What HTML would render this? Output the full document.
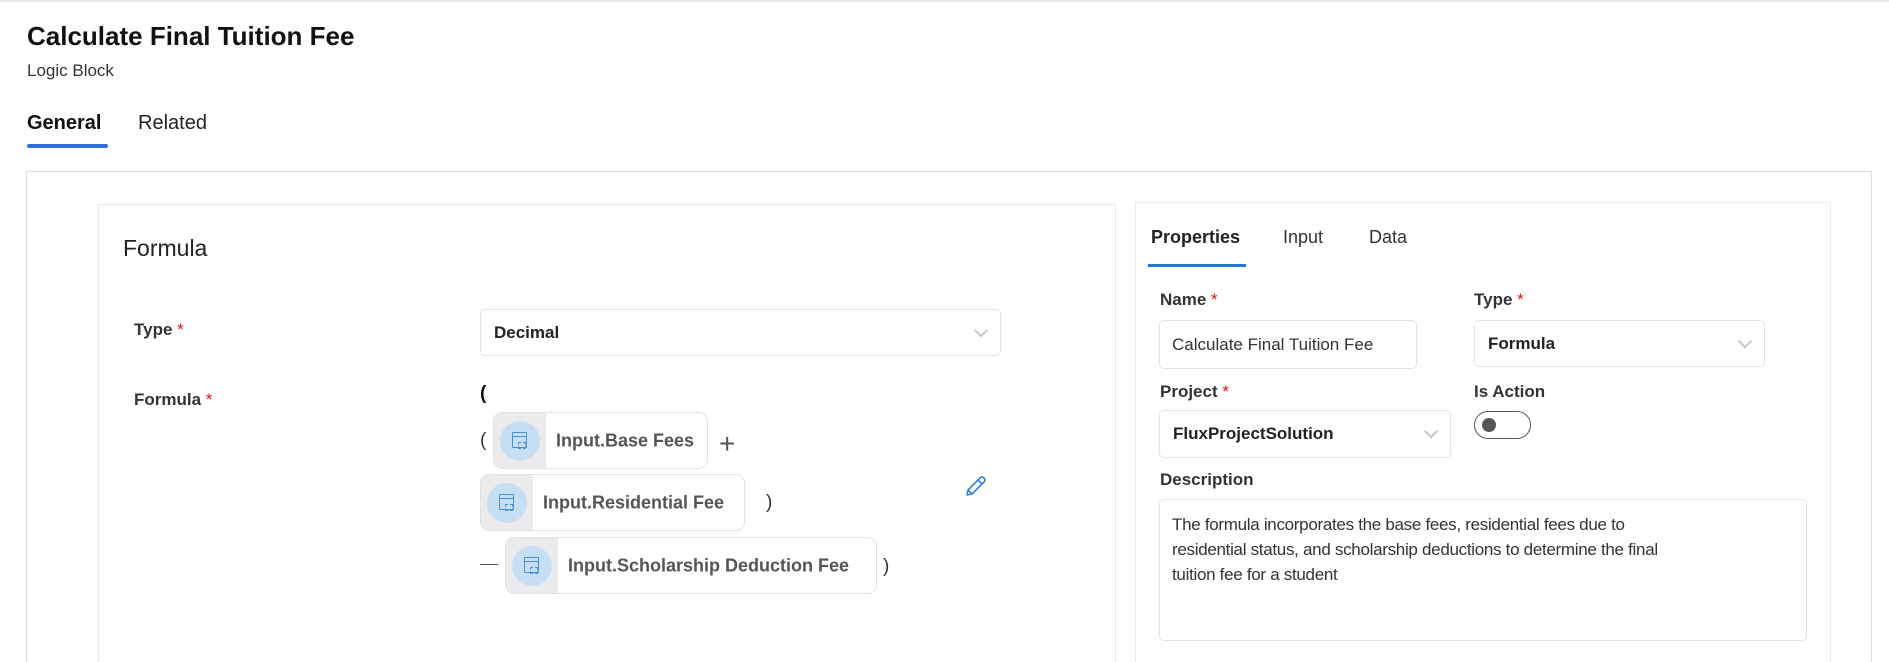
<!DOCTYPE html>
<html><head><meta charset="utf-8"><style>
*{box-sizing:border-box;margin:0;padding:0}
html,body{width:1889px;height:662px;overflow:hidden}
body{background:#fff;font-family:"Liberation Sans",sans-serif;color:#222;position:relative}
.a{position:absolute;white-space:nowrap}
.lbl{font-size:17px;font-weight:bold;color:#333}
.req{color:#d11;font-weight:normal}
.box{position:absolute;border:1px solid #e3e3e3;border-radius:5px;background:#fff}
.sel .t{position:absolute;left:13px;top:50%;transform:translateY(-50%);font-size:17px;font-weight:bold;color:#222}
.chev{position:absolute;right:14px;top:50%;width:10px;height:10px;border-right:2px solid #c8c8c8;border-bottom:2px solid #c8c8c8;transform:translateY(-75%) rotate(45deg)}
.chip{position:absolute;height:57px;border:1px solid #e2e2e2;border-radius:9px;background:#fff;overflow:hidden}
.chip .l{position:absolute;left:0;top:0;bottom:0;width:52px;background:#ebebed}
.chip .c{position:absolute;left:6px;top:8px;width:40px;height:40px;border-radius:50%;background:#c7dff4}
.chip .c i{position:absolute;left:12px;top:11px;width:15px;height:16px;border:1.5px solid #4a8fd8;border-radius:1px}
.chip .c i:before{content:"";position:absolute;left:0;right:0;top:3px;border-top:1.5px solid #4a8fd8}
.chip .c b{position:absolute;left:18px;top:21px;width:8px;height:7px;border:1.5px dashed #4a8fd8}
.chip .tx{position:absolute;left:62px;top:50%;transform:translateY(-50%);font-size:18px;font-weight:bold;color:#555}
.op{font-size:19px;color:#333}
</style></head><body>
<div class="a" style="left:0;top:0;width:1889px;border-top:2px solid #e8e8e8"></div>
<div class="a" style="left:27px;top:21px;font-size:26px;font-weight:bold;color:#111">Calculate Final Tuition Fee</div>
<div class="a" style="left:27px;top:61px;font-size:17px;color:#333">Logic Block</div>
<div class="a" style="left:27px;top:112px;font-size:20px;font-weight:bold;color:#111">General</div>
<div class="a" style="left:138px;top:112px;font-size:20px;color:#222">Related</div>
<div class="a" style="left:27px;top:144px;width:81px;height:4px;background:#2d6fd6;border-radius:2px"></div>

<div class="a" style="left:26px;top:171px;width:1846px;height:491px;border:1px solid #ddd;border-bottom:none"></div>
<div class="a" style="left:98px;top:204px;width:1018px;height:458px;border:1px solid #eaeaea;border-bottom:none"></div>
<div class="a" style="left:123px;top:235px;font-size:23px;color:#222">Formula</div>

<div class="a lbl" style="left:134px;top:320px">Type <span class="req">*</span></div>
<div class="box sel" style="left:480px;top:309px;width:521px;height:47px"><span class="t">Decimal</span><span class="chev"></span></div>
<div class="a lbl" style="left:134px;top:390px">Formula <span class="req">*</span></div>

<div class="a op" style="left:480px;top:383px;font-weight:bold;color:#111">(</div>
<div class="a op" style="left:480px;top:430px">(</div>
<div class="chip" style="left:493px;top:412px;width:215px"><div class="l"></div><div class="c"><i></i><b></b></div><span class="tx">Input.Base Fees</span></div>
<div class="a" style="left:719px;top:428px;font-size:28px;color:#555;font-weight:100">+</div>
<div class="chip" style="left:480px;top:474px;width:265px"><div class="l"></div><div class="c"><i></i><b></b></div><span class="tx">Input.Residential Fee</span></div>
<div class="a op" style="left:766px;top:492px">)</div>
<div class="a" style="left:480px;top:564px;width:18px;border-top:1.5px solid #555"></div>
<div class="chip" style="left:505px;top:537px;width:372px"><div class="l"></div><div class="c"><i></i><b></b></div><span class="tx">Input.Scholarship Deduction Fee</span></div>
<div class="a op" style="left:883px;top:556px">)</div>
<svg class="a" style="left:964px;top:474px" width="24" height="24" viewBox="0 0 24 24"><path d="M3 21 L4 16 L16 4 Q18 2 20 4 Q22 6 20 8 L8 20 Z M4 16 L8 20 M14 6 L18 10" fill="none" stroke="#3a7fd5" stroke-width="1.6" stroke-linejoin="round"/></svg>

<div class="a" style="left:1135px;top:202px;width:696px;height:460px;border:1px solid #eaeaea;border-bottom:none"></div>
<div class="a" style="left:1151px;top:227px;font-size:18px;font-weight:bold;color:#222">Properties</div>
<div class="a" style="left:1283px;top:227px;font-size:18px;color:#333">Input</div>
<div class="a" style="left:1369px;top:227px;font-size:18px;color:#333">Data</div>
<div class="a" style="left:1148px;top:264px;width:98px;height:3px;background:#1f78d1"></div>

<div class="a lbl" style="left:1160px;top:290px">Name <span class="req">*</span></div>
<div class="a lbl" style="left:1474px;top:290px">Type <span class="req">*</span></div>
<div class="box" style="left:1159px;top:320px;width:258px;height:49px"><span class="a" style="left:12px;top:14px;font-size:17px;color:#333">Calculate Final Tuition Fee</span></div>
<div class="box sel" style="left:1474px;top:320px;width:291px;height:47px"><span class="t">Formula</span><span class="chev"></span></div>
<div class="a lbl" style="left:1160px;top:382px">Project <span class="req">*</span></div>
<div class="a lbl" style="left:1474px;top:382px">Is Action</div>
<div class="box sel" style="left:1159px;top:410px;width:292px;height:48px"><span class="t">FluxProjectSolution</span><span class="chev"></span></div>
<div class="a" style="left:1474px;top:411px;width:57px;height:28px;border:1.5px solid #555;border-radius:14px"><div style="position:absolute;left:7px;top:6px;width:14px;height:14px;border-radius:50%;background:#555"></div></div>
<div class="a lbl" style="left:1160px;top:470px">Description</div>
<div class="box" style="left:1159px;top:499px;width:648px;height:142px"><div style="position:absolute;left:12px;top:12px;white-space:nowrap;font-size:17px;line-height:25px;color:#333;letter-spacing:-0.3px">The formula incorporates the base fees, residential fees due to<br>residential status, and scholarship deductions to determine the final<br>tuition fee for a student</div></div>
</body></html>
